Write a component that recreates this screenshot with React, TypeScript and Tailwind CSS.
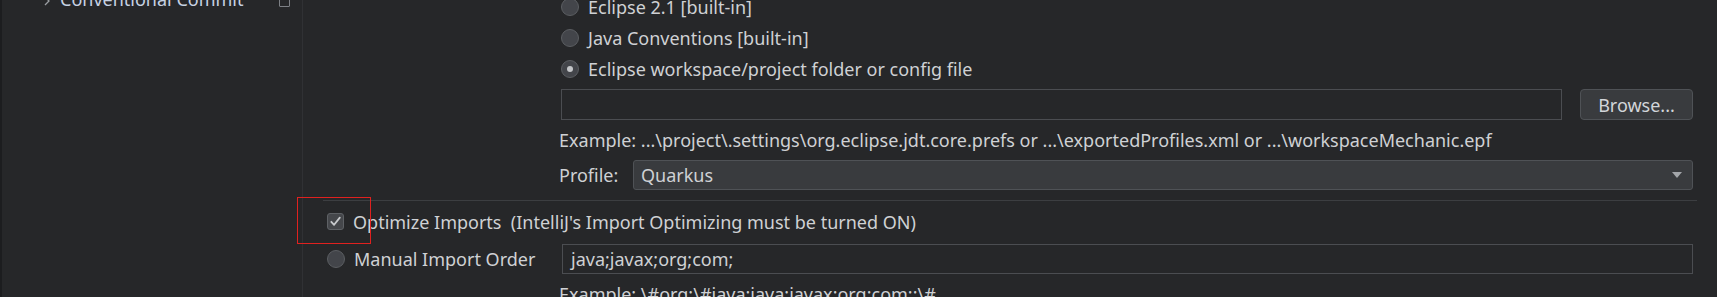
import React from 'react';

const Radio = ({ checked = false }: { checked?: boolean }) => (
  <span className="flex h-[18px] w-[18px] shrink-0 items-center justify-center rounded-full border border-[#5b5e62] bg-[#43454a]">
    {checked && <span className="h-[6px] w-[6px] rounded-full bg-[#c4c6c9]" />}
  </span>
);

const Checkbox = () => (
  <span className="flex h-[17px] w-[17px] shrink-0 items-center justify-center rounded-[3px] border border-[#5e6165] bg-[#45474b]">
    <svg width="13" height="13" viewBox="0 0 13 13" fill="none">
      <path d="M2.3 6.8 L5.1 9.8 L10.8 2.6" stroke="#c9cbce" strokeWidth="1.8" strokeLinecap="round" strokeLinejoin="round" />
    </svg>
  </span>
);

const RadioRow = ({ label, checked }: { label: string; checked?: boolean }) => (
  <div className="flex h-[31px] items-center gap-[9px]">
    <Radio checked={checked} />
    <span>{label}</span>
  </div>
);

export default function App() {
  return (
    <div className="relative flex h-[297px] w-[1717px] overflow-hidden bg-[#262729] text-[18px] leading-[20px] text-[#cfd1d4] font-['Noto_Sans','Open_Sans',sans-serif]">
      <div className="w-[2px] shrink-0 bg-[#1c1d1f]" />

      {/* settings tree */}
      <aside className="w-[301px] shrink-0 border-r border-[#303134]">
        <div className="-mt-[11px] flex h-[20px] items-center pl-[40px] pr-[12px]">
          <svg width="10" height="12" viewBox="0 0 10 12" className="mr-[8px] mt-[4px]">
            <path d="M3 2 L7 6 L3 10" stroke="#9a9da1" strokeWidth="1.3" fill="none" />
          </svg>
          <span className="text-[#c6d2e3]">Conventional Commit</span>
          <span className="ml-auto mt-[4px] h-[12px] w-[11px] rounded-[1px] border border-[#7d8085]" />
        </div>
      </aside>

      {/* settings panel */}
      <main className="flex-1 px-[24px]">
        <div className="-mt-[9px] pl-[234px]">
          <RadioRow label="Eclipse 2.1 [built-in]" />
          <RadioRow label="Java Conventions [built-in]" />
          <RadioRow label="Eclipse workspace/project folder or config file" checked />
          <div className="mt-[5px] flex gap-[18px]">
            <div className="h-[31px] flex-1 border border-[#4b4d51] bg-[#262729]" />
            <button className="h-[31px] w-[113px] shrink-0 rounded-[4px] border border-[#4f5256] bg-[#393b3e] text-[#d2d5d9]">
              Browse...
            </button>
          </div>
          <p className="mt-[10px] -ml-[2px]">
            Example: ...\project\.settings\org.eclipse.jdt.core.prefs or ...\exportedProfiles.xml or ...\workspaceMechanic.epf
          </p>
          <div className="mt-[10px] -ml-[2px] grid grid-cols-[74px_1fr] items-center">
            <span>Profile:</span>
            <div className="flex h-[30px] items-center rounded-[3px] border border-[#4f5256] bg-[#393b3e] pl-[7px] pr-[10px]">
              <span>Quarkus</span>
              <svg width="10" height="6" viewBox="0 0 10 6" className="ml-auto">
                <path d="M0 0 H10 L5 6 Z" fill="#a3a6aa" />
              </svg>
            </div>
          </div>
        </div>

        <div className="mt-[10px] -mx-[4px] h-px bg-[#3c3e41]" />

        <div className="mt-[5px] flex h-[31px] items-center gap-[9px]">
          <Checkbox />
          <span className="whitespace-pre">Optimize Imports  (IntelliJ's Import Optimizing must be turned ON)</span>
        </div>
        <div className="mt-[7px] grid grid-cols-[235px_1fr] items-center">
          <div className="flex items-center gap-[9px]">
            <Radio />
            <span>Manual Import Order</span>
          </div>
          <div className="flex h-[30px] items-center border border-[#4b4d51] pl-[8px]">
            java;javax;org;com;
          </div>
        </div>
        <p className="mt-[10px] pl-[232px]">Example: \#org;\#java;java;javax;org;com;;\#</p>
      </main>

      <div className="pointer-events-none absolute left-[297px] top-[197px] h-[47px] w-[74px] border border-[#e0211f]" />
    </div>
  );
}
